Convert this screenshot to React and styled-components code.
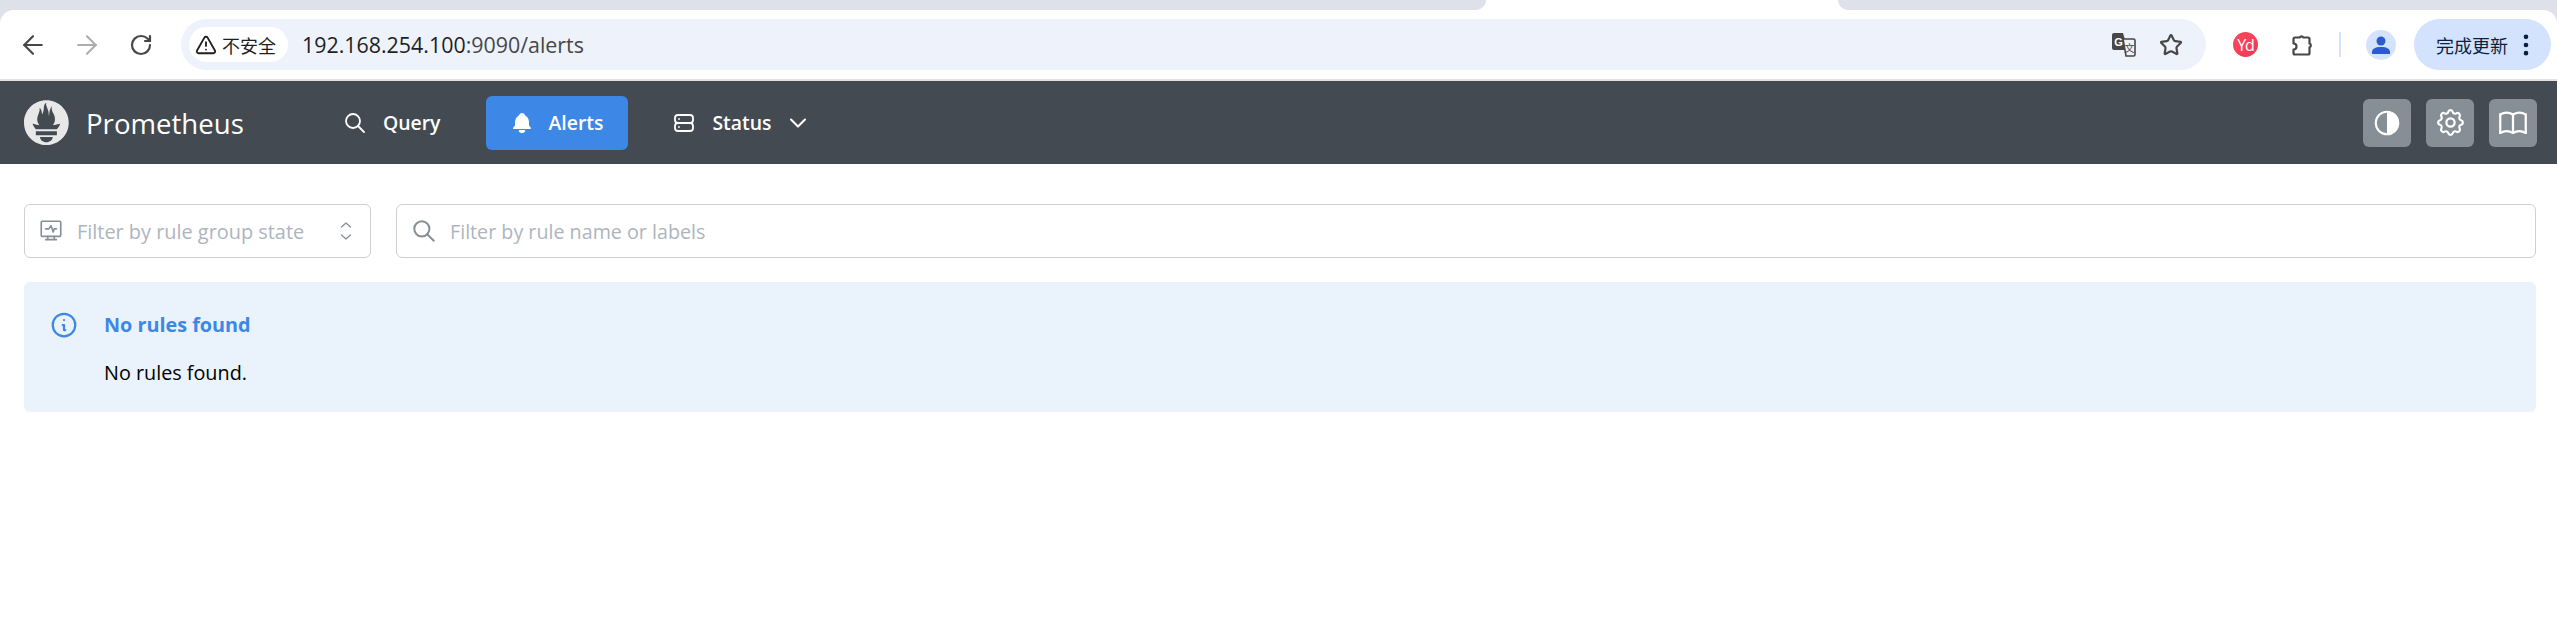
import React from "react";
import styled, { createGlobalStyle } from "styled-components";
import {
  ArrowLeft,
  ArrowRight,
  RotateCw,
  Star,
  MoreVertical,
  TriangleAlert,
} from "lucide-react";

const UI_FONT = '"Open Sans", "Noto Sans", "Noto Sans CJK SC", sans-serif';

const GlobalStyle = createGlobalStyle`
  html, body {
    margin: 0;
    padding: 0;
    background: #fff;
    font-family: ${UI_FONT};
  }
  * { box-sizing: border-box; }
`;

const Page = styled.div`
  width: 2557px;
  height: 617px;
  overflow: hidden;
  background: #fff;
`;

const Chrome = styled.div`
  background: #dee1e9;
`;

const TabStrip = styled.div`
  height: 10px;
  display: flex;
  background: #fff;
`;

const SideTab = styled.div`
  flex: ${(p) => (p.$right ? "1" : "0 0 1486px")};
  background: #dee1e9;
  border-bottom-${(p) => (p.$right ? "left" : "right")}-radius: 12px;
`;

const ActiveTab = styled.div`
  flex: 0 0 352px;
`;

const Toolbar = styled.div`
  height: 71px;
  display: flex;
  align-items: center;
  padding-right: 6px;
  background: #fff;
  border-bottom: 2px solid #e2e2e2;
  border-radius: 14px 14px 0 0;
`;

const NavIcons = styled.div`
  display: flex;
  align-items: center;
  gap: 24px;
  padding-left: 18px;
  width: 181px;
`;

const NavSlot = styled.div`
  width: 30px;
  display: flex;
  justify-content: center;
`;

const Omnibox = styled.div`
  width: 2025px;
  height: 51px;
  display: flex;
  align-items: center;
  padding: 0 23px 0 8px;
  border-radius: 26px;
  background: #edf2fb;
`;

const SecurityChip = styled.div`
  height: 35px;
  width: 99px;
  display: flex;
  align-items: center;
  gap: 5px;
  padding-left: 6px;
  border-radius: 18px;
  background: #fff;
  font-size: 18px;
  color: #1f1f1f;
  font-family: "Noto Sans CJK SC", sans-serif;
`;

const Url = styled.div`
  margin-left: 14px;
  flex: 1;
  font-size: 21.4px;
  color: #1f1f1f;
  font-family: ${UI_FONT};
  span { color: #474747; }
`;

const OmniActions = styled.div`
  display: flex;
  align-items: center;
  gap: 23px;
`;

const Extensions = styled.div`
  display: flex;
  align-items: center;
  margin-left: 27px;
`;

const YdBadge = styled.div`
  width: 25px;
  height: 25px;
  border-radius: 50%;
  background: linear-gradient(135deg, #f9495f, #ec3a52);
  color: #fff;
  font-size: 16px;
  display: flex;
  align-items: center;
  justify-content: center;
  letter-spacing: -1px;
  font-family: "Open Sans", sans-serif;
  margin-right: 32px;
`;

const Divider = styled.div`
  width: 2px;
  height: 25px;
  margin: 0 25px 0 25px;
  background: #d3e3fd;
`;

const Avatar = styled.div`
  width: 30px;
  height: 30px;
  border-radius: 50%;
  background: #d3e3fd;
  display: flex;
  align-items: center;
  justify-content: center;
`;

const UpdatePill = styled.div`
  margin-left: 18px;
  width: 137px;
  height: 51px;
  display: flex;
  align-items: center;
  padding-left: 22px;
  gap: 4px;
  border-radius: 26px;
  background: #d3e3fd;
  color: #0a1f44;
  font-size: 18px;
  font-family: "Noto Sans CJK SC", sans-serif;
`;

const Navbar = styled.div`
  height: 83px;
  display: flex;
  align-items: center;
  padding: 0 20px 0 24px;
  background: #434a52;
`;

const Brand = styled.div`
  display: flex;
  align-items: center;
  gap: 17px;
  width: 292px;
  color: #fff;
  font-size: 27.6px;
`;

const NavLinks = styled.div`
  display: flex;
  align-items: center;
  gap: 20px;
  flex: 1;
`;

const NavLink = styled.div`
  height: 54px;
  display: flex;
  align-items: center;
  gap: 16px;
  padding: 0 25px;
  border-radius: 6px;
  color: #fff;
  font-size: 19.4px;
  font-weight: 600;
  background: ${(p) => (p.$active ? "#3d88e6" : "transparent")};
`;

const Glyph = styled.svg`
  flex: none;
  margin-left: ${(p) => p.$ml || 0}px;
  margin-right: ${(p) => p.$mr || 0}px;
  color: ${(p) => p.$color || "#fff"};
  fill: none;
  stroke: currentColor;
  stroke-linecap: round;
  stroke-linejoin: round;
  stroke-width: ${(p) => p.$stroke || 1.8};
`;

const SquareButton = styled.div`
  width: 48px;
  height: 48px;
  margin-left: 15px;
  border-radius: 6px;
  background: #868e96;
  display: flex;
  align-items: center;
  justify-content: center;
`;

const Content = styled.div`
  padding: 40px 21px 0 24px;
`;

const Filters = styled.div`
  display: flex;
  gap: 25px;
`;

const FilterBox = styled.div`
  flex: ${(p) => (p.$grow ? "1" : "0 0 347px")};
  height: 54px;
  display: flex;
  align-items: center;
  padding: 0 16px 0 13px;
  gap: 13px;
  border: 1px solid #cdd0d4;
  border-radius: 6px;
  background: #fff;
`;

const Placeholder = styled.div`
  flex: 1;
  font-size: ${(p) => p.$size || 19.7}px;
  color: #adb5bd;
`;

const AlertBox = styled.div`
  margin-top: 24px;
  height: 130px;
  display: grid;
  grid-template-columns: 30px 1fr;
  column-gap: 25px;
  padding: 28px 25px;
  border-radius: 6px;
  background: #eaf2fc;
`;

const AlertTitle = styled.div`
  font-size: 19.8px;
  line-height: 29px;
  font-weight: 700;
  color: #3d88e6;
`;

const AlertBody = styled.div`
  margin-top: 21px;
  font-size: 19.8px;
  line-height: 26px;
  color: #000;
`;

function PrometheusLogo() {
  return (
    <svg width="45" height="45" viewBox="0 0 114 114">
      <path
        fill="#e8e8e8"
        fillRule="evenodd"
        d="m56.667.667c-31.295 0-56.667 25.37-56.667 56.665 0 31.295 25.372 56.666 56.667 56.666 31.295 0 56.666-25.371 56.666-56.666 0-31.295-25.372-56.665-56.666-56.665zm0 106.055c-8.904 0-16.123-5.948-16.123-13.283l32.246 0c0 7.335-7.219 13.283-16.123 13.283zm26.630-17.682-53.263 0 0-9.658 53.264 0 0 9.658zm-.191-14.629-52.920 0c-.176-.203-.356-.403-.526-.609-5.452-6.620-6.736-10.076-7.983-13.598-.021-.116 6.611 1.355 11.314 2.413 0 0 2.420.560 5.958 1.205-3.397-3.982-5.414-9.044-5.414-14.218 0-11.359 8.712-21.285 5.569-29.308 3.059.249 6.331 6.456 6.552 16.161 3.252-4.494 4.613-12.701 4.613-17.733 0-5.210 3.433-11.262 6.867-11.469-3.061 5.045.793 9.370 4.219 20.099 1.285 4.030 1.121 10.812 2.113 15.113.329-8.933 1.865-21.967 7.532-26.467-2.500 5.667.370 12.758 2.333 16.167 3.167 5.500 5.087 9.667 5.087 17.548 0 5.284-1.951 10.259-5.242 14.148 3.742-.702 6.326-1.335 6.326-1.335l12.152-2.371c.001-.001-1.765 7.261-8.550 14.255z"
      />
    </svg>
  );
}

function SearchIcon({ size = 24, color, ml, mr }) {
  return (
    <Glyph width={size} height={size} viewBox="0 0 24 24" $color={color} $ml={ml} $mr={mr} $stroke={1.800}>
      <path d="M10 10m-7 0a7 7 0 1 0 14 0a7 7 0 1 0 -14 0" />
      <path d="M21 21l-6 -6" />
    </Glyph>
  );
}

function BellIcon() {
  return (
    <Glyph width="24" height="24" viewBox="0 0 24 24" $ml={-1} $mr={-1} $stroke={0.01}>
      <path
        fill="#fff"
        d="M14.235 19c.865 0 1.322 1.024 .745 1.668a3.992 3.992 0 0 1 -2.980 1.332a3.992 3.992 0 0 1 -2.980 -1.332c-.552 -.616 -.158 -1.579 .634 -1.661l.110 -.006h4.471z"
      />
      <path
        fill="#fff"
        d="M12 2c1.358 0 2.506 .903 2.875 2.141l.046 .171l.008 .043a8.013 8.013 0 0 1 4.024 6.069l.028 .287l.019 .289v2.931l.021 .136a3 3 0 0 0 1.143 1.847l.167 .117l.162 .099c.860 .487 .560 1.766 -.377 1.864l-.116 .006h-16c-1.028 0 -1.387 -1.364 -.493 -1.870a3 3 0 0 0 1.472 -2.063l.021 -.143l.001 -2.970a8 8 0 0 1 3.821 -6.454l.248 -.146l.010 -.043a3.003 3.003 0 0 1 2.562 -2.290l.182 -.017l.176 -.004z"
      />
    </Glyph>
  );
}

function ServerIcon() {
  return (
    <Glyph width="24" height="24" viewBox="0 0 24 24" $ml={-1}>
      <path d="M3 4m0 3a3 3 0 0 1 3 -3h12a3 3 0 0 1 3 3v2a3 3 0 0 1 -3 3h-12a3 3 0 0 1 -3 -3z" />
      <path d="M3 12m0 3a3 3 0 0 1 3 -3h12a3 3 0 0 1 3 3v2a3 3 0 0 1 -3 3h-12a3 3 0 0 1 -3 -3z" />
      <path d="M7 8v.01M7 16v.01" />
    </Glyph>
  );
}

function ChevronIcon() {
  return (
    <Glyph width="28" height="28" viewBox="0 0 24 24" $ml={-3}>
      <path d="M6 9l6 6l6 -6" />
    </Glyph>
  );
}

function ContrastIcon() {
  return (
    <svg width="30" height="30" viewBox="0 0 24 24">
      <circle cx="12" cy="12" r="9" fill="none" stroke="#fff" strokeWidth="1.700" />
      <path d="M12 3a9 9 0 0 1 0 18z" fill="#fff" />
    </svg>
  );
}

function GearIcon() {
  return (
    <Glyph width="33" height="33" viewBox="0 0 24 24" $stroke={1.600}>
      <path d="M10.325 4.317c.426 -1.756 2.924 -1.756 3.350 0a1.724 1.724 0 0 0 2.573 1.066c1.543 -.940 3.310 .826 2.370 2.370a1.724 1.724 0 0 0 1.065 2.572c1.756 .426 1.756 2.924 0 3.350a1.724 1.724 0 0 0 -1.066 2.573c.940 1.543 -.826 3.310 -2.370 2.370a1.724 1.724 0 0 0 -2.572 1.065c-.426 1.756 -2.924 1.756 -3.350 0a1.724 1.724 0 0 0 -2.573 -1.066c-1.543 .940 -3.310 -.826 -2.370 -2.370a1.724 1.724 0 0 0 -1.065 -2.572c-1.756 -.426 -1.756 -2.924 0 -3.350a1.724 1.724 0 0 0 1.066 -2.573c-.940 -1.543 .826 -3.310 2.370 -2.370c1 .608 2.296 .070 2.572 -1.065z" />
      <path d="M9 12a3 3 0 1 0 6 0a3 3 0 0 0 -6 0" />
    </Glyph>
  );
}

function BookIcon() {
  return (
    <Glyph width="34" height="34" viewBox="0 0 24 24" $stroke={1.600}>
      <path d="M3 19a9 9 0 0 1 9 0a9 9 0 0 1 9 0" />
      <path d="M3 6a9 9 0 0 1 9 0a9 9 0 0 1 9 0" />
      <path d="M3 6v13M12 6v13M21 6v13" />
    </Glyph>
  );
}

function HeartbeatMonitorIcon() {
  return (
    <Glyph width="26" height="26" viewBox="0 0 24 24" $color="#868e96" $stroke={1.500}>
      <path d="M3 4a1 1 0 0 1 1 -1h16a1 1 0 0 1 1 1v12a1 1 0 0 1 -1 1h-16a1 1 0 0 1 -1 -1z" />
      <path d="M7 20h10M9 17v3M15 17v3M7 10h3l2 -3l2 6l1 -3h2" />
    </Glyph>
  );
}

function SelectorIcon() {
  return (
    <Glyph width="16" height="20" viewBox="0 0 16 20" $color="#868e96" $stroke={1.300}>
      <path d="M3.500 6l4.500 -4l4.500 4M3.500 14l4.500 4l4.500 -4" />
    </Glyph>
  );
}

function InfoIcon() {
  return (
    <Glyph width="30" height="30" viewBox="0 0 24 24" $color="#3d88e6">
      <path d="M3 12a9 9 0 1 0 18 0a9 9 0 0 0 -18 0" />
      <path d="M12 8h.01M11 12h1v4h1" />
    </Glyph>
  );
}

function TranslateIcon() {
  return (
    <svg width="25" height="25" viewBox="0 0 25 25">
      <path d="M3 1h9l5 17H3a2 2 0 0 1-2-2V3a2 2 0 0 1 2-2z" fill="#474747" />
      <path d="M12 7h10.500a1.500 1.500 0 0 1 1.500 1.500v14a1.500 1.500 0 0 1-1.500 1.500H15z" fill="#edf2fb" stroke="#474747" strokeWidth="1.600" />
      <text x="7.500" y="13.500" textAnchor="middle" fontSize="11" fontWeight="700" fill="#fff" fontFamily="Liberation Sans, sans-serif">G</text>
      <text x="18.500" y="20" textAnchor="middle" fontSize="10" fill="#474747" fontFamily="Noto Sans CJK SC, sans-serif">文</text>
    </svg>
  );
}

function ExtensionIcon() {
  return (
    <svg width="24" height="24" viewBox="0 0 24 24" fill="none" stroke="#474747" strokeWidth="2.200" strokeLinejoin="round">
      <path d="M5 4.500h4.700a2 2 0 0 1 3.600 0H18a1.500 1.500 0 0 1 1.500 1.500v4.500a2 2 0 0 1 0 3.800V20a1.500 1.500 0 0 1-1.500 1.500H5A1.500 1.500 0 0 1 3.500 20v-3.500a3 3 0 0 0 0-6V6A1.500 1.500 0 0 1 5 4.500z" />
    </svg>
  );
}

function PersonIcon() {
  return (
    <svg width="20" height="20" viewBox="0 0 20 20" fill="#2a5bd0">
      <circle cx="10" cy="6" r="4.500" />
      <path d="M1 19v-2c0-3 3-5 9-5s9 2 9 5v2z" />
    </svg>
  );
}

export default function App() {
  return (
    <Page>
      <GlobalStyle />
      <Chrome>
        <TabStrip>
          <SideTab />
          <ActiveTab />
          <SideTab $right />
        </TabStrip>
        <Toolbar>
          <NavIcons>
            <NavSlot>
              <ArrowLeft size={30} color="#474747" strokeWidth={1.700} />
            </NavSlot>
            <NavSlot>
              <ArrowRight size={30} color="#adadad" strokeWidth={1.700} />
            </NavSlot>
            <NavSlot>
              <RotateCw size={24} color="#474747" strokeWidth={2.200} />
            </NavSlot>
          </NavIcons>
          <Omnibox>
            <SecurityChip>
              <TriangleAlert size={22} color="#1f1f1f" strokeWidth={2} />
              不安全
            </SecurityChip>
            <Url>
              192.168.254.100<span>:9090/alerts</span>
            </Url>
            <OmniActions>
              <TranslateIcon />
              <Star size={24} color="#474747" strokeWidth={2.200} />
            </OmniActions>
          </Omnibox>
          <Extensions>
            <YdBadge>Yd</YdBadge>
            <ExtensionIcon />
            <Divider />
            <Avatar>
              <PersonIcon />
            </Avatar>
          </Extensions>
          <UpdatePill>
            完成更新
            <MoreVertical size={28} color="#0a1f44" strokeWidth={2} />
          </UpdatePill>
        </Toolbar>
      </Chrome>
      <Navbar>
        <Brand>
          <PrometheusLogo />
          Prometheus
        </Brand>
        <NavLinks>
          <NavLink>
            <SearchIcon ml={2} />
            Query
          </NavLink>
          <NavLink $active>
            <BellIcon />
            Alerts
          </NavLink>
          <NavLink>
            <ServerIcon />
            Status
            <ChevronIcon />
          </NavLink>
        </NavLinks>
        <SquareButton>
          <ContrastIcon />
        </SquareButton>
        <SquareButton>
          <GearIcon />
        </SquareButton>
        <SquareButton>
          <BookIcon />
        </SquareButton>
      </Navbar>
      <Content>
        <Filters>
          <FilterBox>
            <HeartbeatMonitorIcon />
            <Placeholder $size={19.9}>Filter by rule group state</Placeholder>
            <SelectorIcon />
          </FilterBox>
          <FilterBox $grow>
            <SearchIcon size={26} color="#868e96" ml={1} />
            <Placeholder>Filter by rule name or labels</Placeholder>
          </FilterBox>
        </Filters>
        <AlertBox>
          <InfoIcon />
          <div>
            <AlertTitle>No rules found</AlertTitle>
            <AlertBody>No rules found.</AlertBody>
          </div>
        </AlertBox>
      </Content>
    </Page>
  );
}
